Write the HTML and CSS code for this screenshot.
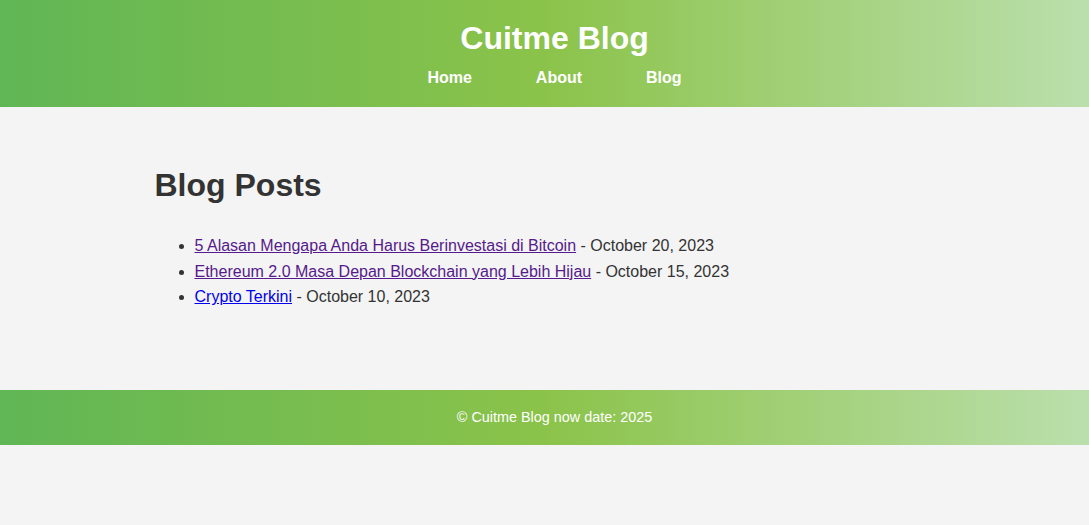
FILE: index.html
```html
<!DOCTYPE html>
<html lang="id">
<head>
<meta charset="utf-8">
<title>Cuitme Blog</title>
<link rel="stylesheet" href="styles.css">
</head>
<body>
<header class="site-header">
  <h1 class="site-title">Cuitme Blog</h1>
  <nav class="site-nav">
    <a href="#" class="nav-link">Home</a>
    <a href="#" class="nav-link">About</a>
    <a href="#" class="nav-link">Blog</a>
  </nav>
</header>
<main class="content">
  <h2 class="page-title">Blog Posts</h2>
  <ul class="post-list">
    <li><a href="#" class="post-link visited">5 Alasan Mengapa Anda Harus Berinvestasi di Bitcoin</a> - October 20, 2023</li>
    <li><a href="#" class="post-link visited">Ethereum 2.0 Masa Depan Blockchain yang Lebih Hijau</a> - October 15, 2023</li>
    <li><a href="#" class="post-link">Crypto Terkini</a> - October 10, 2023</li>
  </ul>
</main>
<footer class="site-footer">
  <p class="footer-text">© Cuitme Blog now date: 2025</p>
</footer>
</body>
</html>
```
FILE: styles.css
```css
html, body {
  margin: 0;
  padding: 0;
}
body {
  background: #f4f4f4;
  color: #333;
  font-family: "Liberation Sans", Arial, sans-serif;
  font-size: 16px;
  line-height: 1.6;
}
.site-header {
  background: linear-gradient(to right, #60b655 0%, #8bc34a 50%, #bbdfac 100%);
  padding: 18px 0 19px 20px;
  text-align: center;
  color: #fff;
}
.site-title {
  margin: 0;
  font-size: 32px;
  line-height: 40px;
  font-weight: bold;
}
.site-nav {
  margin-top: 10px;
  display: flex;
  justify-content: center;
  gap: 64px;
  line-height: 20px;
}
.nav-link {
  color: #fff;
  text-decoration: none;
  font-weight: bold;
  font-size: 16px;
}
.content {
  width: 800px;
  margin: 0 auto;
  padding: 58px 0 80px 20px;
  box-sizing: content-box;
}
.page-title {
  margin: 0;
  font-size: 32px;
  line-height: 40px;
  font-weight: bold;
  color: #333;
}
.post-list {
  margin: 28px 0 0;
  padding-left: 40px;
}
.post-list li {
  line-height: 25.6px;
}
.post-link {
  color: #0000ee;
}
.post-link.visited {
  color: #551a8b;
}
.site-footer {
  background: linear-gradient(to right, #60b655 0%, #8bc34a 50%, #bbdfac 100%);
  padding: 16px 0 16px 20px;
  text-align: center;
  color: #fff;
}
.footer-text {
  margin: 0;
  font-size: 14.4px;
  line-height: 23px;
}
```
